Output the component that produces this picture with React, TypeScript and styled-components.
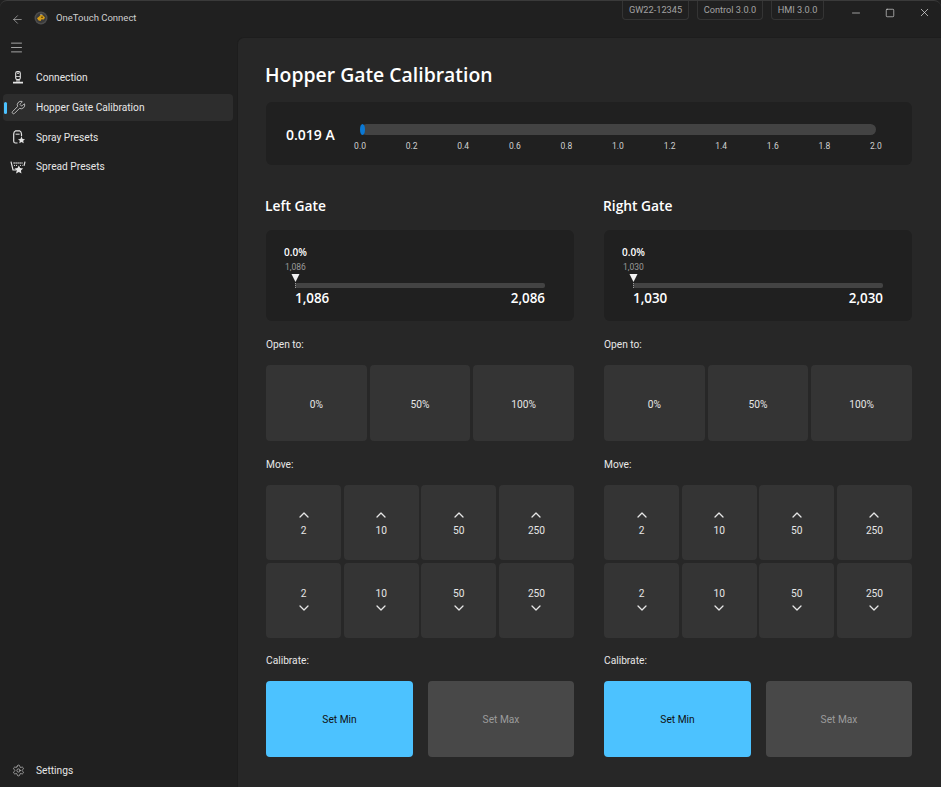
import React from "react";
import styled, { createGlobalStyle } from "styled-components";
import { ArrowLeft, ChevronDown, ChevronUp, Menu, Minus, Settings, Square, Wrench, X } from "lucide-react";

const Global = createGlobalStyle`
  html, body { margin: 0; padding: 0; width: 941px; height: 787px; overflow: hidden; background: #202020; }
  #root { width: 941px; height: 787px; }
  * { box-sizing: border-box; }
`;

const Strong = `"Open Sans", "Roboto", sans-serif`;

const Window = styled.div`
  width: 941px;
  height: 787px;
  display: grid;
  grid-template-columns: 237px 1fr;
  grid-template-rows: 36px 1fr;
  background: #202020;
  color: #fff;
  font-family: "Roboto", "Open Sans", sans-serif;
  font-size: 10.2px;
  border-top: 1px solid #3a3a3a;
  border-radius: 7px 7px 0 0;
  overflow: hidden;
`;

const TitleBar = styled.header`
  grid-column: 1 / 3;
  display: flex;
  align-items: flex-start;
`;

const BackButton = styled.div`
  width: 34px;
  height: 36px;
  display: flex;
  align-items: center;
  justify-content: center;
  color: #b5b5b5;
`;

const AppName = styled.span`
  margin-left: 8px;
  height: 34px;
  line-height: 34px;
  color: #cfcfcf;
  font-size: 9.5px;
`;

const LogoWrap = styled.div`
  height: 34px;
  display: flex;
  align-items: center;
`;

const Chips = styled.div`
  margin-left: auto;
  display: flex;
  gap: 8px;
  margin-top: -1px;
`;

const Chip = styled.div<{ $w: number }>`
  width: ${(p) => p.$w}px;
  height: 20px;
  display: flex;
  align-items: center;
  justify-content: center;
  color: #a3a3a3;
  font-size: 9.2px;
  border: 1px solid #343434;
  border-top: 0;
  border-radius: 0 0 4px 4px;
`;

const WinButtons = styled.div`
  display: flex;
  margin-left: 15px;
`;

const WinButton = styled.div`
  width: 34px;
  height: 23px;
  display: flex;
  align-items: center;
  justify-content: center;
  color: #e2e2e2;
`;

const Sidebar = styled.nav`
  display: flex;
  flex-direction: column;
  padding: 0 4px 0 3px;
`;

const MenuButton = styled.div`
  height: 20px;
  margin-bottom: 7px;
  margin-left: 6px;
  display: flex;
  align-items: center;
  color: #cfcfcf;
`;

const NavItem = styled.div<{ $active?: boolean }>`
  position: relative;
  height: 27px;
  margin-bottom: 2.8px;
  display: flex;
  align-items: center;
  gap: 10px;
  padding-left: 7px;
  border-radius: 4px;
  color: #e6e6e6;
  background: ${(p) => (p.$active ? "#2d2d2d" : "transparent")};
`;

const Indicator = styled.span`
  position: absolute;
  left: 1px;
  top: 8px;
  width: 2.5px;
  height: 12px;
  border-radius: 2px;
  background: #4cc2ff;
`;

const NavIcon = styled.span`
  width: 16px;
  height: 16px;
  display: flex;
  align-items: center;
  justify-content: center;
  color: #e4e4e4;
`;

const SettingsItem = styled(NavItem)`
  margin-top: auto;
  margin-bottom: 3px;
`;

const Main = styled.main`
  background: #272727;
  border-top-left-radius: 7px;
  padding: 0 29px 0 28px;
  display: flex;
  flex-direction: column;
  border-left: 1px solid #1d1d1d;
  border-top: 1px solid #1d1d1d;
`;

const PageTitle = styled.h1`
  margin: 22px 0 12px -1px;
  height: 30px;
  line-height: 30px;
  font-family: ${Strong};
  font-size: 19.4px;
  font-weight: 600;
  color: #fff;
`;

const Meter = styled.section`
  height: 63px;
  background: #202020;
  border-radius: 6px;
  display: flex;
  align-items: flex-start;
  padding: 0 36px 0 20px;
  margin-bottom: 31px;
`;

const MeterValue = styled.div`
  width: 75px;
  height: 63px;
  line-height: 65px;
  font-family: ${Strong};
  font-size: 14px;
  font-weight: 600;
`;

const MeterScale = styled.div`
  flex: 1;
  padding-top: 22px;
`;

const MeterTrack = styled.div`
  position: relative;
  height: 11px;
  border-radius: 5.5px;
  background: #434343;
`;

const MeterThumb = styled.span`
  position: absolute;
  left: -1px;
  top: 0;
  width: 5px;
  height: 11px;
  border-radius: 50%;
  background: #0a78d4;
`;

const Ticks = styled.div`
  display: flex;
  justify-content: space-between;
  margin: 5px 0 0 -1px;
`;

const Tick = styled.span`
  width: 0;
  display: flex;
  justify-content: center;
  font-size: 8.5px;
  line-height: 12px;
  color: #d0d0d0;
`;

const Columns = styled.div`
  display: grid;
  grid-template-columns: 308px 308px;
  column-gap: 30px;
`;

const GateColumn = styled.section`
  display: flex;
  flex-direction: column;
`;

const GateTitle = styled.h2`
  margin: 0 0 14px -1px;
  height: 20px;
  line-height: 20px;
  font-family: ${Strong};
  font-size: 13.8px;
  font-weight: 600;
`;

const GateCard = styled.div`
  height: 91px;
  background: #202020;
  border-radius: 6px;
  padding: 15px 29px 0 18px;
  display: flex;
  flex-direction: column;
`;

const Percent = styled.div`
  font-family: ${Strong};
  font-size: 10px;
  font-weight: 600;
  line-height: 14px;
`;

const Raw = styled.div`
  font-size: 8.5px;
  line-height: 12px;
  margin: 2px 0 0 1px;
  color: #9a9a9a;
`;

const GateTrack = styled.div`
  position: relative;
  margin: 10px 0 0 11px;
  height: 5px;
  border-radius: 2px;
  background: #434343;
`;

const Pointer = styled.svg`
  position: absolute;
  left: -4px;
  top: -9px;
`;

const Ends = styled.div`
  display: flex;
  justify-content: space-between;
  margin: 1px 0 0 11px;
  font-family: ${Strong};
  font-size: 13.4px;
  font-weight: 600;
  line-height: 18px;
`;

const SectionLabel = styled.div<{ $top: number; $bottom: number }>`
  margin: ${(p) => p.$top}px 0 ${(p) => p.$bottom}px 0;
  height: 14px;
  line-height: 14px;
  color: #e8e8e8;
`;

const OpenGrid = styled.div`
  display: grid;
  grid-template-columns: repeat(3, 1fr);
  gap: 3px;
`;

const FlatButton = styled.div`
  background: #343434;
  border-radius: 4px;
  display: flex;
  flex-direction: column;
  align-items: center;
  justify-content: center;
  color: #e6e6e6;
`;

const OpenButton = styled(FlatButton)`
  height: 76px;
  padding-top: 2px;
`;

const MoveGrid = styled.div`
  display: grid;
  grid-template-columns: repeat(4, 1fr);
  grid-auto-rows: 75px;
  gap: 3px 2.67px;
`;

const MoveButton = styled(FlatButton)`
  line-height: 15px;
  svg { margin: -0.5px 0; }
`;

const CalibrateGrid = styled.div`
  display: grid;
  grid-template-columns: 147px 146px;
  justify-content: space-between;
`;

const CalButton = styled(FlatButton)<{ $primary?: boolean }>`
  height: 76px;
  background: ${(p) => (p.$primary ? "#4cc2ff" : "#484848")};
  color: ${(p) => (p.$primary ? "#101010" : "#9c9c9c")};
`;

const Logo = () => (
  <svg width="14" height="14" viewBox="0 0 14 14">
    <circle cx="7" cy="7" r="6.5" fill="#4d4d4d" />
    <circle cx="7" cy="7" r="5" fill="#3a3a3a" />
    <path d="M3 7.2 L5.2 5.4 L7 3.6 L9 4.6 L11 6.6 L9.8 8.6 L7.4 8.2 L6.6 10 L4.6 9.4 Z" fill="#d49c18" />
    <path d="M6 3.4h2.4" stroke="#8a8a8a" strokeWidth="1" />
    <path d="M7 6.2h2" stroke="#3a2c08" strokeWidth="0.9" />
  </svg>
);

const ConnectionIcon = () => (
  <svg width="16" height="16" viewBox="0 0 16 16" fill="none" stroke="currentColor" strokeWidth="1.1">
    <rect x="5.7" y="1.6" width="4.6" height="8" rx="1.6" />
    <path d="M7 3.3h2" />
    <path d="M6 6.5h4" strokeWidth="0.8" />
    <path d="M7 9.6v2.2M9 9.6v2.2" />
    <path d="M3 12.7h10" strokeWidth="1.7" />
  </svg>
);

const SprayIcon = () => (
  <svg width="16" height="16" viewBox="0 0 16 16" fill="none">
    <path d="M7.5 14H5.5a1.8 1.8 0 0 1-1.8-1.8V5a3.6 3.6 0 0 1 2-3.2h3.8A3.6 3.6 0 0 1 11.5 5v2.2" stroke="currentColor" strokeWidth="1.2" />
    <path d="M5.6 5.2h4" stroke="currentColor" strokeWidth="1" />
    <path d="M11.5 7.6l1.1 2.3 2.4.3-1.8 1.6.5 2.4-2.2-1.2-2.2 1.2.5-2.4-1.8-1.6 2.4-.3z" fill="currentColor" />
  </svg>
);

const SpreadIcon = () => (
  <svg width="16" height="16" viewBox="0 0 16 16" fill="none">
    <path d="M1 2.6l2 8.4h3" stroke="currentColor" strokeWidth="1.2" />
    <path d="M15 2.6l-1 4.2" stroke="currentColor" strokeWidth="1.2" />
    <path d="M3.5 4h9" stroke="currentColor" strokeWidth="1.4" strokeDasharray="1.2 0.8" />
    <path d="M4 6.4h3M10 6.4h2.6" stroke="currentColor" strokeWidth="1" strokeDasharray="1 1" />
    <path d="M8.8 6.4l1.3 2.7 3 .4-2.2 2 .6 2.9-2.7-1.5-2.7 1.5.6-2.9-2.2-2 3-.4z" fill="currentColor" />
  </svg>
);

const steps = [2, 10, 50, 250];
const ticks = ["0.0", "0.2", "0.4", "0.6", "0.8", "1.0", "1.2", "1.4", "1.6", "1.8", "2.0"];

const Gate = ({ title, min, max }: { title: string; min: string; max: string }) => (
  <GateColumn>
    <GateTitle>{title}</GateTitle>
    <GateCard>
      <Percent>0.0%</Percent>
      <Raw>{min}</Raw>
      <GateTrack>
        <Pointer width="9" height="14" viewBox="0 0 9 14">
          <path d="M0.5 0h8L4.5 8z" fill="#f2f2f2" />
          <path d="M4.5 9v5" stroke="#9a9a9a" strokeWidth="1" strokeDasharray="1 1" />
        </Pointer>
      </GateTrack>
      <Ends>
        <span>{min}</span>
        <span>{max}</span>
      </Ends>
    </GateCard>
    <SectionLabel $top={17} $bottom={13}>Open to:</SectionLabel>
    <OpenGrid>
      <OpenButton>0%</OpenButton>
      <OpenButton>50%</OpenButton>
      <OpenButton>100%</OpenButton>
    </OpenGrid>
    <SectionLabel $top={17} $bottom={13}>Move:</SectionLabel>
    <MoveGrid>
      {steps.map((s) => (
        <MoveButton key={`u${s}`}>
          <ChevronUp size={16} strokeWidth={1.9} />
          {s}
        </MoveButton>
      ))}
      {steps.map((s) => (
        <MoveButton key={`d${s}`}>
          {s}
          <ChevronDown size={16} strokeWidth={1.9} />
        </MoveButton>
      ))}
    </MoveGrid>
    <SectionLabel $top={16} $bottom={13}>Calibrate:</SectionLabel>
    <CalibrateGrid>
      <CalButton $primary>Set Min</CalButton>
      <CalButton>Set Max</CalButton>
    </CalibrateGrid>
  </GateColumn>
);

export default function App() {
  return (
    <Window>
      <Global />
      <TitleBar>
        <BackButton><ArrowLeft size={13} strokeWidth={1.3} /></BackButton>
        <LogoWrap><Logo /></LogoWrap>
        <AppName>OneTouch Connect</AppName>
        <Chips>
          <Chip $w={67}>GW22-12345</Chip>
          <Chip $w={66}>Control 3.0.0</Chip>
          <Chip $w={53}>HMI 3.0.0</Chip>
        </Chips>
        <WinButtons>
          <WinButton><Minus size={12} strokeWidth={1.3} /></WinButton>
          <WinButton><Square size={10} strokeWidth={1.5} /></WinButton>
          <WinButton><X size={13} strokeWidth={1.3} /></WinButton>
        </WinButtons>
      </TitleBar>
      <Sidebar>
        <MenuButton><Menu size={15} strokeWidth={1.2} /></MenuButton>
        <NavItem><NavIcon><ConnectionIcon /></NavIcon>Connection</NavItem>
        <NavItem $active>
          <Indicator />
          <NavIcon><Wrench size={15} strokeWidth={1.2} /></NavIcon>
          Hopper Gate Calibration
        </NavItem>
        <NavItem><NavIcon><SprayIcon /></NavIcon>Spray Presets</NavItem>
        <NavItem><NavIcon><SpreadIcon /></NavIcon>Spread Presets</NavItem>
        <SettingsItem><NavIcon><Settings size={13} strokeWidth={1.1} /></NavIcon>Settings</SettingsItem>
      </Sidebar>
      <Main>
        <PageTitle>Hopper Gate Calibration</PageTitle>
        <Meter>
          <MeterValue>0.019 A</MeterValue>
          <MeterScale>
            <MeterTrack><MeterThumb /></MeterTrack>
            <Ticks>{ticks.map((t) => <Tick key={t}>{t}</Tick>)}</Ticks>
          </MeterScale>
        </Meter>
        <Columns>
          <Gate title="Left Gate" min="1,086" max="2,086" />
          <Gate title="Right Gate" min="1,030" max="2,030" />
        </Columns>
      </Main>
    </Window>
  );
}
